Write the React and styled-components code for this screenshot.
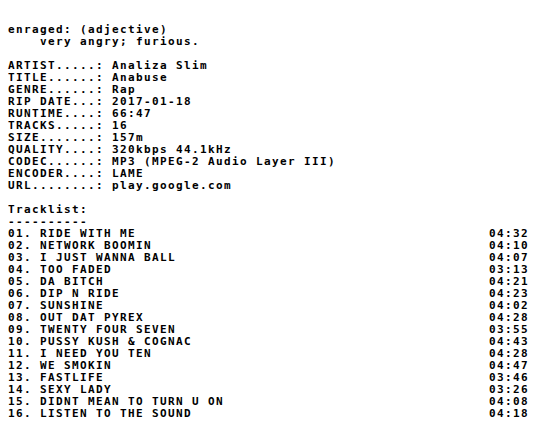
import styled, { createGlobalStyle } from "styled-components"

const info = [
    ["ARTIST", "Analiza Slim"],
    ["TITLE", "Anabuse"],
    ["GENRE", "Rap"],
    ["RIP DATE", "2017-01-18"],
    ["RUNTIME", "66:47"],
    ["TRACKS", "16"],
    ["SIZE", "157m"],
    ["QUALITY", "320kbps 44.1kHz"],
    ["CODEC", "MP3 (MPEG-2 Audio Layer III)"],
    ["ENCODER", "LAME"],
    ["URL", "play.google.com"],
]

const tracks = [
    ["RIDE WITH ME", "04:32"],
    ["NETWORK BOOMIN", "04:10"],
    ["I JUST WANNA BALL", "04:07"],
    ["TOO FADED", "03:13"],
    ["DA BITCH", "04:21"],
    ["DIP N RIDE", "04:23"],
    ["SUNSHINE", "04:02"],
    ["OUT DAT PYREX", "04:28"],
    ["TWENTY FOUR SEVEN", "03:55"],
    ["PUSSY KUSH & COGNAC", "04:43"],
    ["I NEED YOU TEN", "04:28"],
    ["WE SMOKIN", "04:47"],
    ["FASTLIFE", "03:46"],
    ["SEXY LADY", "03:26"],
    ["DIDNT MEAN TO TURN U ON", "04:08"],
    ["LISTEN TO THE SOUND", "04:18"],
]

// labels are padded with dots to 11 columns, then ": "
const dotted = (label) => label + ".".repeat(11 - label.length) + ": "
const num = (i) => String(i + 1).padStart(2, "0") + ". "

const App = () => {
    return (
        <>
            <GlobalStyle />
            <Page>
                <Section>
                    <Line>enraged: (adjective)</Line>
                    <Line $indent={4}>very angry; furious.</Line>
                </Section>
                <Section>
                    {info.map(([label, value]) => (
                        <Line key={label}>{dotted(label)}{value}</Line>
                    ))}
                </Section>
                <Section>
                    <Line>Tracklist:</Line>
                    <Line>----------</Line>
                    {tracks.map(([title, time], i) => (
                        <Track key={title}>
                            <span>{num(i)}{title}</span>
                            <span>{time}</span>
                        </Track>
                    ))}
                </Section>
            </Page>
        </>
    )
}

const GlobalStyle = createGlobalStyle`
    body {
        margin: 0;
        background: #fff;
    }
`

const Page = styled.div`
    display: flex;
    flex-direction: column;
    gap: 12px;
    padding: 24px 8px 0;
    font-family: "DejaVu Sans Mono", "Liberation Mono", monospace;
    font-weight: 700;
    font-size: 11px;
    letter-spacing: 1.378px;
    line-height: 12px;
    color: #000;
`

const Section = styled.div`
    display: flex;
    flex-direction: column;
`

const Line = styled.div`
    white-space: pre;
    height: 12px;
    padding-left: ${(p) => (p.$indent || 0) * 8}px;
`

const Track = styled.div`
    display: flex;
    justify-content: space-between;
    width: 521px;
    height: 12px;
    white-space: pre;
`

export default App
